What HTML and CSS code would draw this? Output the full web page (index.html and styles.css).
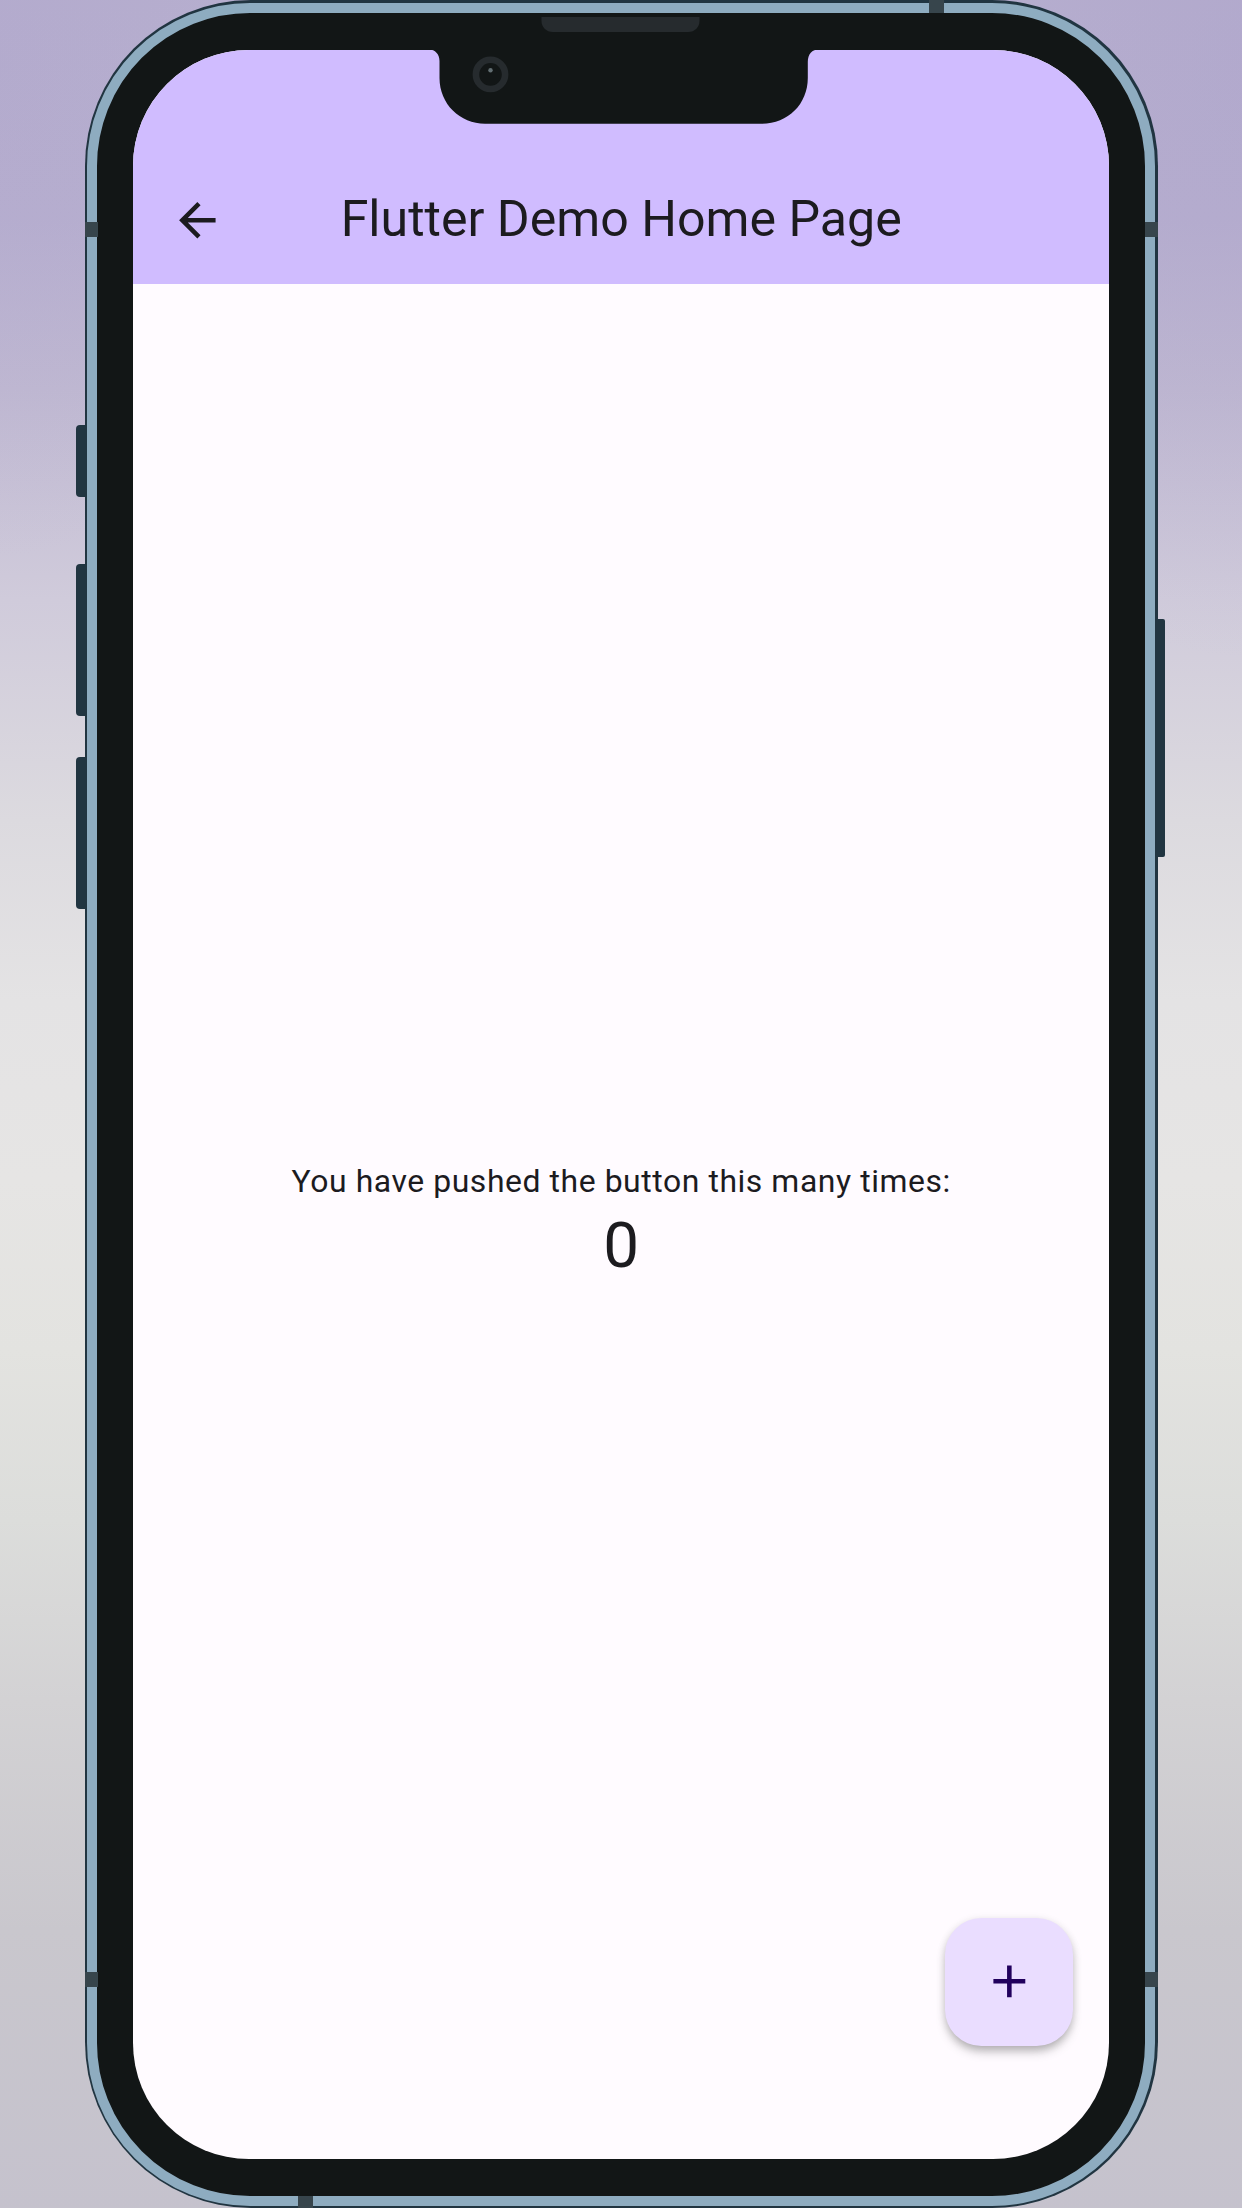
FILE: index.html
```html
<!DOCTYPE html>
<html lang="en">
<head>
<meta charset="utf-8">
<title>Flutter Demo</title>
<link rel="stylesheet" href="styles.css">
</head>
<body>
<div class="stage">
  <div class="phone">
    <span class="key key-mute"></span>
    <span class="key key-up"></span>
    <span class="key key-down"></span>
    <span class="key key-power"></span>
    <div class="rim">
      <div class="bezel">
        <main class="screen">
          <header class="app-bar">
            <button class="back" aria-label="Back">
              <svg viewBox="0 0 24 24"><path d="M20 11H7.83l5.59-5.59L12 4l-8 8 8 8 1.41-1.41L7.83 13H20v-2z"/></svg>
            </button>
            <h1 class="title">Flutter Demo Home Page</h1>
          </header>
          <section class="content">
            <p class="label">You have pushed the button this many times:</p>
            <p class="count">0</p>
          </section>
          <button class="fab" aria-label="Increment">
            <svg viewBox="0 0 24 24"><path d="M19 13h-6v6h-2v-6H5v-2h6V5h2v6h6v2z"/></svg>
          </button>
        </main>
      </div>
    </div>
    <span class="band band-side band-left band-high"></span>
    <span class="band band-side band-right band-high"></span>
    <span class="band band-side band-left band-low"></span>
    <span class="band band-side band-right band-low"></span>
    <span class="band band-top"></span>
    <span class="band band-bottom"></span>
    <svg class="notch" viewBox="0 0 392 116">
      <path class="notch-body" d="M0 36V41.5H1C7 41.5 11.5 46 11.5 53V70C11.5 96 32 115.7 57 115.7H334C360 115.7 379.8 96 379.8 70V54C379.8 46 384 41.5 391 41.5H392V36Z"/>
      <path class="notch-detail" d="M113.5 9H271.5V13C271.5 19 267 24 260 24H125C118 24 113.5 19 113.5 13Z"/>
      <circle class="lens" cx="62.5" cy="66.4" r="14.6"/>
      <circle class="glint" cx="62.5" cy="62.3" r="2.2"/>
    </svg>
  </div>
</div>
</body>
</html>
```
FILE: styles.css
```css
* { box-sizing: border-box; }

body {
  margin: 0;
  font-family: Roboto, "Liberation Sans", sans-serif;
  color: #1c1b1f;
}

button { padding: 0; border: 0; background: none; }

.stage {
  width: 1242px;
  height: 2208px;
  padding-left: 84.6px;
  overflow: hidden;
  background:
    radial-gradient(ellipse 350px 600px at 100% 60px, rgba(168, 158, 200, .35), transparent),
    radial-gradient(ellipse 300px 500px at 0 60px, rgba(168, 158, 200, .25), transparent),
    linear-gradient(#b7afcf 0, #b8b0d0 220px, #c0b9d2 390px, #d0cbdb 600px, #dcdadf 820px, #e4e3e4 1000px, #e6e5e4 1180px, #e3e3e0 1350px, #dcdddb 1520px, #d3d2d4 1700px, #c9c7cd 1930px, #c5c2cd 2208px);
}

.phone {
  position: relative;
  width: 1073.2px;
  height: 2207.5px;
}

.rim {
  height: 100%;
  padding: 3px 2.6px 2px;
  background: #213541;
  border-radius: 166px;
}

.bezel {
  height: 100%;
  padding: 36.5px 36px;
  border: 10px solid #8eacc0;
  background: #121616;
  border-radius: 163px;
}

.screen {
  position: relative;
  display: flex;
  flex-direction: column;
  height: 100%;
  overflow: hidden;
  background: #fffbff;
  border-radius: 116px;
}

.app-bar {
  display: grid;
  grid-template-columns: 127.6px 1fr 127.6px;
  align-items: center;
  height: 234.5px;
  padding-top: 107px;
  background: #d0bcff;
}

.back { display: grid; place-items: center; }

.back svg { width: 54.7px; height: 54.7px; fill: #1c1b1f; }

.title {
  margin: 0;
  padding-bottom: 2px;
  font-size: 50.1px;
  font-weight: 400;
  line-height: 64px;
  text-align: center;
  white-space: nowrap;
}

.content {
  flex: 1;
  display: flex;
  flex-direction: column;
  justify-content: center;
  padding-top: 3px;
  text-align: center;
}

.label, .count { margin: 0; }

.label { font-size: 31.9px; line-height: 45.6px; letter-spacing: .57px; }

.count { font-size: 63.8px; line-height: 82px; }

.fab {
  position: absolute;
  right: 36.4px;
  bottom: 113.4px;
  display: grid;
  place-items: center;
  width: 127.6px;
  height: 127.6px;
  border-radius: 36.5px;
  background: #eaddff;
  box-shadow: 0 7px 11px -2px rgba(0, 0, 0, .26), 0 2px 8px rgba(0, 0, 0, .12);
}

.fab svg { width: 54.7px; height: 54.7px; fill: #21005d; }

/* Hardware keys on the outer edge of the case */
.key { position: absolute; left: -8.6px; width: 8.6px; background: #213541; border-radius: 4px 0 0 4px; }
.key-mute { top: 424.5px; height: 72.5px; }
.key-up { top: 564px; height: 152px; }
.key-down { top: 757px; height: 151.5px; }
.key-power { left: auto; right: -7.3px; width: 7.5px; top: 618.7px; height: 238.3px; border-radius: 0 2px 2px 0; }

/* Antenna bands across the metal rim */
.band { position: absolute; background: #37454c; }
.band-side { width: 13px; height: 15px; }
.band-left { left: 0; }
.band-right { right: 0; }
.band-high { top: 222px; }
.band-low { top: 1972px; }
.band-top { top: 0; left: 844.4px; width: 15px; height: 13px; }
.band-bottom { bottom: -1px; left: 213.4px; width: 15px; height: 13px; }

.notch { position: absolute; top: 8px; left: 343.1px; width: 392px; height: 116px; }
.notch-body { fill: #121616; }
.notch-detail { fill: #262b2e; }
.lens { fill: none; stroke: #262b2e; stroke-width: 6.6; }
.glint { fill: #636f73; }
```
